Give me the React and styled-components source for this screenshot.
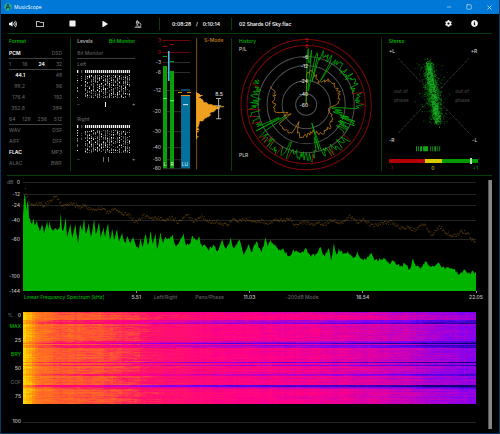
import React from 'react';
import styled, { createGlobalStyle, css } from 'styled-components';
import { FaVolumeUp, FaRegFolder, FaStop, FaPlay, FaCog, FaInfoCircle } from 'react-icons/fa';
import { Microscope, Minus, Square, X } from 'lucide-react';

const GlobalStyle = createGlobalStyle`
    * {
        box-sizing: border-box;
    }
    body {
        margin: 0;
        background: #000000;
        color: #c4c4c4;
        font: 500 5px/6px Inter, 'Liberation Sans', sans-serif;
    }
    svg {
        display: block;
    }
    svg text {
        font-size: 5px;
    }
`;

const LINE = '#063f0a';
const GREEN = '#00b000';

const plainButton = css`
    padding: 0;
    border: 0;
    background: none;
    font: inherit;
    color: inherit;
    cursor: pointer;
`;

const Window = styled.div`
    display: flex;
    flex-direction: column;
    min-height: 100vh;
    border: 1px solid #063a66;
    border-top: 0;
`;

const TitleBar = styled.header`
    display: flex;
    align-items: center;
    height: 14px;
    padding-left: 3px;
    background: #0078d7;
    color: #ffffff;
`;

const AppName = styled.h1`
    flex: 1;
    margin: 0 0 0 2px;
    font: 500 5px/6px 'Open Sans', sans-serif;
`;

const WindowButton = styled.button`
    ${plainButton}
    display: flex;
    align-items: center;
    justify-content: center;
    width: 20px;
    height: 14px;
`;

const Toolbar = styled.div`
    display: flex;
    align-items: center;
    height: 20px;
    margin: 0 7px 0 6px;
    padding-right: 12px;
    border-bottom: 1px solid ${LINE};
    color: #f2f2f2;
    font-weight: 600;
`;

const ToolButton = styled.button`
    ${plainButton}
    display: flex;
    align-items: center;
    justify-content: center;
    width: 12px;
    height: 19px;
    margin-left: ${(props) => props.$gap}px;
`;

const Splitter = styled.span`
    width: 1px;
    height: 12px;
    margin-left: ${(props) => props.$gap}px;
    background: ${LINE};
`;

const Time = styled.div`
    display: flex;
    justify-content: space-between;
    width: 48px;
    margin-left: 12px;
`;

const Track = styled.div`
    flex: 1;
    margin-left: 7px;
`;

const Panels = styled.div`
    display: grid;
    grid-template-columns: 64fr 82fr 79fr 149fr 110fr;
    margin: 0 7px 0 6px;
    padding: 4px 0;
    border-bottom: 1px solid ${LINE};
`;

const Panel = styled.section`
    min-width: 0;
    padding: ${(props) => props.$pad || '0'};
    border-right: ${(props) => (props.$divided ? `1px solid ${LINE}` : '0')};
    & > svg {
        width: 100%;
    }
`;

const PanelTitle = styled.h2`
    display: flex;
    justify-content: space-between;
    margin: 0 0 ${(props) => (props.$tight ? 0 : 4)}px;
    font-size: 5px;
    line-height: 6px;
    font-weight: 600;
    color: ${GREEN};
`;

const TitleButton = styled.button`
    ${plainButton}
    color: ${(props) => (props.$active ? GREEN : '#b0b0b0')};
`;

const Row = styled.div`
    display: flex;
    justify-content: space-between;
    height: 11px;
    line-height: 11px;
    border-bottom: ${(props) => (props.$rule ? '1px solid #404040' : '0')};
`;

const Value = styled.span`
    min-width: ${(props) => (props.$numeric ? 16 : 0)}px;
    text-align: right;
    color: ${(props) => (props.$on ? '#ffffff' : '#5c5c5c')};
    font-weight: ${(props) => (props.$on ? 600 : 500)};
`;

const Channel = styled.div`
    color: #606060;
    & + & {
        margin-top: 7px;
    }
    & > svg {
        width: 53px;
        height: 28px;
    }
`;

const ChannelName = styled.div`
    line-height: 11px;
`;

const Offset = styled.div`
    display: flex;
    justify-content: space-between;
    align-items: center;
    height: 6px;
    margin-top: 3px;
    color: #a0a0a0;
`;

const OffsetMarks = styled.span`
    display: flex;
    gap: 4px;
    height: 5px;
    i {
        width: 1px;
        background: ${(props) => (props.$dim ? '#707070' : '#f0f0f0')};
    }
`;

const Correlation = styled.div`
    display: flex;
    position: relative;
    height: 4px;
    margin-top: 5px;
`;

const Zone = styled.span`
    flex: ${(props) => props.$size};
    background: ${(props) => props.$color};
`;

const Needle = styled.span`
    position: absolute;
    top: -1px;
    left: 91%;
    width: 2px;
    height: 6px;
    background: #b4dcb4;
`;

const CorrelationScale = styled.div`
    display: flex;
    justify-content: space-between;
    margin-top: 2px;
    line-height: 6px;
`;

const Tint = styled.span`
    color: ${(props) => props.$color};
`;

const Analysis = styled.main`
    display: flex;
    flex: 1;
`;

const Charts = styled.div`
    flex: 1;
    min-width: 0;
`;

const ScrollTrack = styled.div`
    width: 4px;
    margin: 4px 7px 4px 12px;
    background: #868686;
    border-left: 1px solid #555555;
`;

const Chart = styled.section`
    display: grid;
    grid-template-columns: 20px 1fr;
    column-gap: 2px;
    padding-top: ${(props) => props.$top}px;
`;

const Axis = styled.svg`
    width: 20px;
    height: 109px;
    overflow: visible;
`;

const Plot = styled.svg`
    width: 100%;
    height: ${(props) => props.$height}px;
`;

const Footer = styled.div`
    display: flex;
    grid-column: 2;
    height: 12px;
    line-height: 11px;
`;

const Quarter = styled.div`
    display: flex;
    flex: 1;
`;

const Modes = styled.div`
    display: flex;
    flex: 1;
    align-items: center;
    justify-content: ${(props) => (props.$first ? 'flex-start' : 'center')};
    gap: 18px;
    padding-left: ${(props) => (props.$first ? 1 : 0)}px;
    white-space: nowrap;
`;

const Mode = styled.button`
    ${plainButton}
    line-height: 11px;
    color: ${(props) => (props.$on ? GREEN : '#606060')};
`;

const Tick = styled.span`
    width: 16px;
    margin-right: -8px;
    line-height: 9px;
    text-align: center;
    &::before {
        content: '';
        display: block;
        width: 1px;
        height: 2px;
        margin: 0 auto;
        background: #909090;
    }
`;

const PercentAxis = styled.div`
    display: flex;
    flex-direction: column;
    align-items: flex-end;
`;

const Percent = styled.div`
    display: flex;
    justify-content: flex-end;
    align-items: center;
    gap: 5px;
    height: ${(props) => (props.$edge ? 8 : 14)}px;
    margin-top: ${(props) => (props.$last ? 14 : 0)}px;
`;

const HeatArea = styled.div`
    padding-top: 1px;
`;

const Baseline = styled.div`
    height: 1px;
    margin-top: 18px;
    background: #262626;
`;

// small seeded generator so every render draws the same traces
const random = (seed) => {
    let s = seed;
    return () => {
        s = (s * 1664525 + 1013904223) % 4294967296;
        return s / 4294967296;
    };
};

const lerpAt = (pts, x) => {
    let i = 1;
    while (i < pts.length - 1 && pts[i][0] < x) i++;
    const [x0, y0] = pts[i - 1];
    const [x1, y1] = pts[i];
    const t = Math.min(1, Math.max(0, (x - x0) / (x1 - x0)));
    return y0 + (y1 - y0) * t;
};

const pairs = (str) => str.split(' ').map((p) => p.split(',').map(Number));

// spectrum traces, three units per pixel
const SPECTRUM = '68,125 72,62 75,68 78,110 81,83 84,88 86,130 95,150 99,133 103,153 110,140 118,172 125,150 131,178 140,140 144,165 148,142 155,168 165,162 175,165 178,160 181,116 185,168 191,160 196,130 200,190 210,150 216,192 225,150 233,208 239,150 246,170 251,134 256,180 265,148 272,188 281,136 286,180 296,145 301,192 309,160 314,188 323,148 329,198 335,165 341,198 350,166 356,202 365,176 375,207 380,187 390,207 398,190 405,210 415,224 421,192 427,220 435,180 443,212 451,171 457,210 465,176 470,224 480,174 488,207 495,188 505,192 517,180 523,210 535,207 549,178 555,210 565,212 577,185 585,197 597,188 603,212 615,215 622,225 630,218 638,210 652,232 665,195 677,224 691,191 700,222 717,196 730,244 745,210 752,234 768,202 783,234 794,190 802,217 810,197 822,212 835,230 848,223 865,247 878,226 900,237 915,223 928,242 948,240 960,219 970,244 985,223 993,257 1000,207 1008,242 1015,223 1030,238 1042,232 1058,252 1070,232 1085,254 1102,248 1113,236 1125,257 1150,250 1162,262 1180,262 1200,275 1212,268 1228,284 1237,252 1245,275 1265,278 1273,260 1295,275 1312,266 1330,278 1342,280 1360,285 1378,300 1390,286 1405,295 1418,291 1426,298';
const PEAKS = '68,100 74,52 79,74 85,92 105,88 125,98 145,80 165,70 180,90 200,95 225,92 250,100 300,108 360,112 385,128 405,140 430,130 460,132 480,138 500,130 530,142 555,125 575,138 600,130 640,145 680,150 710,136 730,140 750,138 780,145 810,142 865,135 880,150 930,148 960,155 985,138 1010,148 1040,132 1080,140 1130,155 1150,140 1200,158 1230,165 1270,155 1295,180 1320,160 1355,190 1380,170 1415,195 1426,195';

const spectrumArea = (() => {
    const r = random(4);
    const pts = pairs(SPECTRUM);
    let d = 'M68 351';
    pts.forEach(([x, y], i) => {
        d += `L${x} ${y}`;
        const next = pts[i + 1];
        if (!next) return;
        for (let m = x + 3; m < next[0] - 1; m += 3) {
            d += `L${m} ${(lerpAt(pts, m) + (r() - 0.3) * 11).toFixed(1)}`;
        }
    });
    return `${d}V351Z`;
})();

const peakDots = (() => {
    const r = random(11);
    const pts = pairs(PEAKS);
    let d = '';
    for (let x = 68; x < 1424; x += 2) {
        const y = lerpAt(pts, x) + Math.sin(x / 7) * 4 + (r() - 0.5) * 12;
        d += `M${x} ${y.toFixed(1)}h3`;
    }
    return d;
})();

const SPECTRUM_LEVELS = [[0, 0], [-12, 12], [-24, 23], [-40, 38], [-60, 57], [-100, 94], [-144, 109]];

const HEAT = [
    [0, [255, 215, 0]],
    [0.12, [255, 150, 10]],
    [0.3, [255, 88, 48]],
    [0.42, [255, 20, 105]],
    [0.56, [255, 0, 135]],
    [0.68, [212, 0, 175]],
    [0.8, [155, 0, 225]],
    [0.9, [110, 0, 250]],
    [1.05, [50, 0, 190]],
    [1.2, [15, 0, 110]],
];

const heatColor = (v) => {
    const c = [0, 1, 2].map((k) => Math.round(lerpAt(HEAT.map(([t, rgb]) => [t, rgb[k]]), v)));
    return `rgb(${c.join(',')})`;
};

const HEAT_BASE = [[0, 0.02], [0.015, 0.08], [0.03, 0.22], [0.08, 0.29], [0.17, 0.31], [0.23, 0.37], [0.3, 0.44], [0.45, 0.54], [0.65, 0.6], [0.8, 0.68], [0.92, 0.77], [1, 0.83]];
const DARK_ROWS = { 8: 0.14, 9: 0.16, 10: 0.19, 11: 0.3, 29: 0.1, 30: 0.15, 31: 0.38, 33: 0.27, 34: 0.22, 35: 0.17, 50: 0.32, 53: 0.25, 62: 0.2, 63: 0.15, 73: 0.38, 74: 0.4, 75: 0.16, 76: 0.1 };

const heatPaths = (() => {
    const r = random(29);
    const cells = {};
    const columns = Array.from({ length: 151 }, () => (r() - 0.5) * 0.03);
    for (let y = 0; y < 92; y++) {
        const rowShift = (DARK_ROWS[y] || 0) + (r() - 0.5) * 0.07 + (y === 0 ? 0.08 : 0);
        let drift = 0;
        for (let i = 0; i < 151; i++) {
            const x = i / 150;
            drift = drift * 0.6 + (r() - 0.5) * 0.06;
            const shift = rowShift * Math.min(1, 0.35 + x * 2.5);
            const v = lerpAt(HEAT_BASE, x) + shift + drift + columns[i] * (x < 0.03 ? 0.5 : 1);
            const key = Math.max(0, Math.round(v * 40));
            cells[key] = `${cells[key] || ''}M${i * 3} ${y + 0.5}h3`;
        }
    }
    return Object.entries(cells).map(([key, d]) => [heatColor(key / 40), d]);
})();

const bitPaths = (seed) => {
    const r = random(seed);
    const out = { '#f0f0f0': '', '#909090': '', '#505050': '' };
    const shades = Object.keys(out);
    for (let c = 0; c < 27; c++) {
        if (c === 1 || c === 3) continue;
        const x = c * 2;
        const faint = c === 2;
        out[faint ? shades[2] : shades[0]] += `M${x} 0h1.3v3h-1.3z`;
        const density = c === 0 ? 0.5 : faint ? 0.25 : 0.65 + 0.15 * Math.sin(c * 1.9);
        for (let y = 5; y < 28; y++) {
            if (faint && y > 16) break;
            if (r() < density) {
                const t = r();
                out[shades[t < 0.12 ? 0 : t < 0.5 ? 1 : 2]] += `M${x} ${y}h1v1h-1z`;
            }
        }
    }
    return Object.entries(out);
};

const METER_LEVELS = [[3, 2], [0, 14], [-3, 24], [-6, 34], [-12, 52], [-20, 73], [-30, 93], [-40, 109], [-50, 121], [-60, 130]];

const loudnessShape = (() => {
    const r = random(8);
    const pts = [[54, 1], [55, 4], [57, 5], [59, 3], [61, 5], [63, 9], [65, 13], [67, 20], [68, 27], [70, 22], [72, 18], [74, 16], [77, 13], [80, 8], [83, 5], [86, 4], [89, 3], [93, 2], [100, 1]];
    let d = 'M43 54';
    for (let y = 54; y < 101; y++) {
        d += `H${(43 + Math.max(1, lerpAt(pts, y) + (r() - 0.5) * 3)).toFixed(1)}V${y + 1}`;
    }
    return `${d}H43Z`;
})();

const CX = 74;
const CY = 66.5;
const polar = (deg, radius) => {
    const a = (deg * Math.PI) / 180;
    return `${(CX + Math.sin(a) * radius).toFixed(1)} ${(CY - Math.cos(a) * radius).toFixed(1)}`;
};

const RINGS = [[65, '3'], [59, '0'], [48, '-6'], [39, '-12'], [24, '-24'], [10.5, '-40']];

const peakHistory = (() => {
    const r = random(17);
    const dips = [[4, 2, 42], [8, 3, 14], [14, 2, 24], [31, 2, 28], [97, 3, 26], [101, 3, 30], [105, 2, 28], [163, 2, 19], [166, 2, 34], [202, 3, 40], [240, 3, 24], [244, 2, 30]];
    const segments = { [GREEN]: '', '#a80c0c': '' };
    let prev = polar(0, 1);
    for (let a = 1; a <= 298; a += 1.2) {
        let radius = 46 + r() * 12;
        if (a > 92 && a < 125) radius = 34 + r() * 19;
        const dip = dips.find(([at, width]) => Math.abs(a - at) < width / 2);
        if (dip) [, , radius] = dip;
        const next = polar(a, radius);
        segments[radius > 56.8 ? '#a80c0c' : GREEN] += `M${prev}L${next}`;
        prev = next;
    }
    return Object.entries(segments);
})();

const loudHistory = (() => {
    const r = random(5);
    const pts = [[1, 31], [10, 34], [22, 29], [30, 25], [41, 32], [55, 34], [67, 35], [80, 33], [90, 32], [97, 24], [105, 24], [112, 28], [125, 31], [140, 33], [150, 33], [160, 30], [168, 27], [180, 31], [190, 33], [198, 28], [203, 19], [207, 33], [220, 33], [234, 34], [239, 17], [243, 26], [247, 18], [255, 32], [272, 32], [288, 33], [297, 38]];
    let d = `M${CX} ${CY}`;
    for (let a = 1; a < 298; a += 2) {
        d += `L${polar(a, lerpAt(pts, a) + (r() - 0.5) * 4)}`;
    }
    return d;
})();

const stereoCloud = (() => {
    const r = random(23);
    const gauss = () => r() + r() + r() + r() - 2;
    const out = { '#064e08': '', '#0a7c10': '', '#1aa826': '' };
    const shades = Object.keys(out);
    for (let i = 0; i < 1900; i++) {
        const s = (r() * 2 - 1) * (i % 5 ? 0.9 : 1);
        const spread = i % 6 ? 6 * (1.1 - Math.abs(s) * 0.6) : 11;
        const x = 43.5 + s * 5 + gauss() * spread;
        const y = 48 + s * 32 + gauss() * 3;
        const core = Math.abs(x - 43.5 - s * 5) < 3;
        out[shades[Math.floor(r() * (core ? 3 : 1.5))]] += `M${x.toFixed(1)} ${y.toFixed(1)}h.9v.9h-.9z`;
    }
    return Object.entries(out);
})();

const FORMAT_ROWS = [
    { values: ['PCM', 'DSD'], on: 'PCM', rule: true },
    { values: ['1', '16', '24', '32'], on: '24', rule: true },
    { values: ['44.1', '48'], on: '44.1', numeric: true },
    { values: ['88.2', '96'], numeric: true },
    { values: ['176.4', '192'], numeric: true },
    { values: ['352.8', '384'], numeric: true },
    { values: ['64', '128', '256', '512'], rule: true },
    { values: ['WAV', 'DSF'] },
    { values: ['AIFF', 'DFF'] },
    { values: ['FLAC', 'MP3'], on: 'FLAC' },
    { values: ['ALAC', 'BWF'] },
];

const Paths = ({ items }) => items.map(([color, d]) => <path key={color} d={d} fill={color} />);

const AppIcon = () => (
    <svg width="8" height="8" viewBox="0 0 16 16">
        <circle cx="8" cy="8" r="7.5" fill="#2fa59a" />
        <path d="M4 13L7 3h2l-1 4 4 2-1 4M5 9h4" fill="none" stroke="#0b3d3a" strokeWidth="1.8" />
    </svg>
);

const FormatPanel = () => (
    <Panel $divided $pad="0 8px 0 2px">
        <PanelTitle>Format</PanelTitle>
        {FORMAT_ROWS.map(({ values, on, rule, numeric }) => (
            <Row key={values[0]} $rule={rule}>
                {values.map((v) => <Value key={v} $on={v === on} $numeric={numeric}>{v}</Value>)}
            </Row>
        ))}
    </Panel>
);

const BitChannel = ({ name, seed, marks, dim }) => (
    <Channel>
        <ChannelName>{name}</ChannelName>
        <svg viewBox="0 0 53 28"><Paths items={bitPaths(seed)} /></svg>
        <Offset>
            <span>-</span>
            <OffsetMarks $dim={dim}>{marks.map((m) => <i key={m} />)}</OffsetMarks>
            <span>+</span>
        </Offset>
    </Channel>
);

const BitPanel = () => (
    <Panel $pad="0 18px 0 6px">
        <PanelTitle>
            <TitleButton>Levels</TitleButton>
            <TitleButton $active>Bit Monitor</TitleButton>
        </PanelTitle>
        <Row $rule><Value>Bit Monitor</Value></Row>
        <BitChannel name="Left" seed={3} marks={[1]} />
        <BitChannel name="Right" seed={9} marks={[1, 2]} dim />
    </Panel>
);

const MeterPanel = () => (
    <Panel $divided>
        <svg viewBox="0 0 78 133">
            {METER_LEVELS.map(([db, y]) => (
                <g key={db}>
                    <text x="8" y={y + 2} textAnchor="end" fill={db >= 0 ? '#b01010' : '#b4b4b4'}>{db}</text>
                    <path d={`M10 ${y + 0.5}H37`} stroke={db >= 0 ? '#6a0808' : '#303030'} />
                </g>
            ))}
            <path d="M10 28h4v102h-4zM17 33h4v97h-4z" fill="#0aa00a" />
            <path d="M10 60h4v1h-4zM17 62h4v1h-4z" fill="#3cff3c" />
            <path d="M10 18h4v1h-4zM17 23h4v1h-4z" fill="#0c9c0c" />
            <path d="M10 8h4v1h-4zM17 6h4v1h-4z" fill="#a01010" />
            <path d="M15 13h1.5v30H15z" fill="#4fc4ee" />
            <path d="M28 51h9v2h-9z" fill="#0b4963" />
            <path d="M28 57h9v73h-9z" fill="#04709c" />
            <path d="M25 54h4v1h-4zM34 54h4v1h-4zM28 57h9v1h-9z" fill="#e08a14" />
            <path d="M30 66h5v1h-5z" fill="#d8e8f0" />
            <text x="12" y="128" textAnchor="middle" fill="#c8f4c8">L</text>
            <text x="19" y="128" textAnchor="middle" fill="#c8f4c8">R</text>
            <text x="32" y="128" textAnchor="middle" fill="#b8e0f0">LU</text>
            <text x="51" y="4" fill="#b87314" fontWeight="600">S-Mode</text>
            <path d="M43.5 0V131" stroke="#80500e" />
            <path d={loudnessShape} fill="#f0a020" />
            <path d="M65.5 60v20M63 60.5h5M63 80.5h5M63 67.5h5" stroke="#b0b0b0" fill="none" />
            <text x="66" y="58" textAnchor="middle" fill="#e0e0e0">8.5</text>
        </svg>
    </Panel>
);

const HistoryPanel = () => (
    <Panel $divided>
        <svg viewBox="0 0 148 133">
            {RINGS.map(([radius, db]) => (
                <circle key={db} cx={CX} cy={CY} r={radius} fill="none" stroke={radius > 50 ? '#7c0808' : '#505050'} />
            ))}
            <path d={loudHistory} fill="none" stroke="#c07c14" strokeWidth="0.8" />
            {peakHistory.map(([color, d]) => <path key={color} d={d} stroke={color} strokeWidth="0.8" />)}
            {[...RINGS, [0, '-60']].map(([radius, db]) => (
                <text key={db} x="76" y={CY - radius + 2} textAnchor="end" fill={radius > 50 ? '#c81818' : '#dcdcdc'}>{db}</text>
            ))}
            <text x="7" y="5" fill={GREEN}>History</text>
            <text x="7" y="13" fill="#c4c4c4">P/L</text>
            <text x="7" y="119" fill="#c4c4c4">PLR</text>
        </svg>
    </Panel>
);

const StereoPanel = () => (
    <Panel $pad="0 14px 0 7px">
        <PanelTitle $tight>Stereo</PanelTitle>
        <svg viewBox="0 0 89 110">
            <path d="M9 14L80 89M80 14L9 89" stroke="#606060" strokeWidth="0.8" strokeDasharray="1 1" />
            <Paths items={stereoCloud} />
            <g fill="#d0d0d0">
                <text x="0" y="9">+L</text>
                <text x="88" y="9" textAnchor="end">+R</text>
                <text x="0" y="98">-R</text>
                <text x="88" y="98" textAnchor="end">-L</text>
            </g>
            <g fill="#404040">
                <text x="5" y="49">out of</text>
                <text x="5" y="58">phase</text>
                <text x="66" y="49">out of</text>
                <text x="66" y="58">phase</text>
            </g>
            <path d="M29 102h1v5h-1zM41 102h1v5h-1zM43 102h1v5h-1zM45 102h1v5h-1zM48 102h1v5h-1zM50 102h1v5h-1z" fill="#0b7a10" />
            <path d="M27 102h1v5h-1zM31 102h2v5h-2zM34 102h5v5h-5zM46 102h1v5h-1z" fill="#14a41c" />
        </svg>
        <Correlation>
            <Zone $size={36} $color="#b40000" />
            <Zone $size={17} $color="#d8cc00" />
            <Zone $size={36} $color="#009a00" />
            <Needle />
        </Correlation>
        <CorrelationScale>
            <Tint $color="#8c0a0a">-1</Tint>
            <Tint $color="#c8bc00">0</Tint>
            <Tint $color="#007c00">+1</Tint>
        </CorrelationScale>
    </Panel>
);

const SpectrumChart = () => (
    <Chart $top={6}>
        <Axis viewBox="0 0 20 109">
            <text x="6" y="2" fill="#606060">dB</text>
            {SPECTRUM_LEVELS.map(([db, y]) => (
                <text key={db} x="19" y={y + 2} textAnchor="end" fill="#bcbcbc">{db}</text>
            ))}
        </Axis>
        <Plot $height={109} viewBox="68 24 1358 327" preserveAspectRatio="none">
            {SPECTRUM_LEVELS.slice(0, 5).map(([db, y]) => (
                <path key={db} d={`M68 ${y * 3 + 25.5}H1426`} stroke="#242424" strokeWidth="3" />
            ))}
            <path d={peakDots} stroke="#9a6810" strokeWidth="2" opacity="0.8" />
            <path d={spectrumArea} fill="#00b400" />
        </Plot>
        <Footer>
            <Quarter>
                <Modes $first><Mode $on>Linear Frequency Spectrum [kHz]</Mode></Modes>
                <Tick>5.51</Tick>
            </Quarter>
            <Quarter>
                <Modes><Mode>Left/Right</Mode><Mode>Pano/Phase</Mode></Modes>
                <Tick>11.03</Tick>
            </Quarter>
            <Quarter>
                <Modes><Mode>-200dB Mode</Mode></Modes>
                <Tick>16.54</Tick>
            </Quarter>
            <Quarter>
                <Modes />
                <Tick>22.05</Tick>
            </Quarter>
        </Footer>
    </Chart>
);

const SpectrogramChart = () => (
    <Chart $top={8}>
        <PercentAxis>
            <Percent $edge><Tint $color="#6a6a6a">%</Tint>0</Percent>
            <Percent><Mode $on>MAX</Mode></Percent>
            <Percent>25</Percent>
            <Percent><Mode $on>BRY</Mode></Percent>
            <Percent>50</Percent>
            <Percent><Mode>COF</Mode></Percent>
            <Percent>75</Percent>
            <Percent $edge $last>100</Percent>
        </PercentAxis>
        <HeatArea>
            <Plot $height={92} viewBox="0 0 453 92" preserveAspectRatio="none" shapeRendering="crispEdges">
                {heatPaths.map(([color, d]) => <path key={color} d={d} stroke={color} />)}
            </Plot>
            <Baseline />
        </HeatArea>
    </Chart>
);

const App = () => (
    <>
        <GlobalStyle />
        <Window>
            <TitleBar>
                <AppIcon />
                <AppName>MusicScope</AppName>
                <WindowButton aria-label="Minimize"><Minus size={6} /></WindowButton>
                <WindowButton aria-label="Maximize"><Square size={6} /></WindowButton>
                <WindowButton aria-label="Close"><X size={7} /></WindowButton>
            </TitleBar>
            <Toolbar>
                <ToolButton $gap={0} aria-label="Volume"><FaVolumeUp size={8} /></ToolButton>
                <ToolButton $gap={15} aria-label="Open"><FaRegFolder size={8} /></ToolButton>
                <ToolButton $gap={20} aria-label="Stop"><FaStop size={7} /></ToolButton>
                <ToolButton $gap={21} aria-label="Play"><FaPlay size={6} /></ToolButton>
                <ToolButton $gap={21} aria-label="Analyze"><Microscope size={8} /></ToolButton>
                <Splitter $gap={15} />
                <Time><span>0:08:28</span><span>/</span><span>0:10:14</span></Time>
                <Splitter $gap={11} />
                <Track>02 Shards Of Sky.flac</Track>
                <ToolButton $gap={0} aria-label="Settings"><FaCog size={7} /></ToolButton>
                <ToolButton $gap={14} aria-label="Info"><FaInfoCircle size={7} /></ToolButton>
            </Toolbar>
            <Panels>
                <FormatPanel />
                <BitPanel />
                <MeterPanel />
                <HistoryPanel />
                <StereoPanel />
            </Panels>
            <Analysis>
                <Charts>
                    <SpectrumChart />
                    <SpectrogramChart />
                </Charts>
                <ScrollTrack />
            </Analysis>
        </Window>
    </>
);

export default App;
